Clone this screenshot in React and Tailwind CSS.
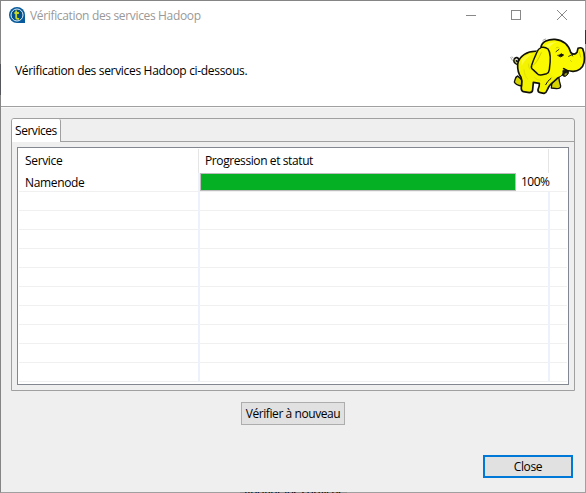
const rows = Array.from({ length: 10 }, (_, i) => i);

function AppIcon() {
  return (
    <svg width="16" height="16" viewBox="0 0 16 16" className="shrink-0">
      <path d="M8 0a8 8 0 1 0 0 16h8V8a8 8 0 0 0-8-8z" fill="#075a9b" />
      <circle cx="8" cy="8" r="6" fill="#034f8c" stroke="#e4eff7" strokeWidth="1" />
      <path d="M7.2 3.6v6.6q0 1.6 1.6 1.6h1.4M5.4 6h4.5" fill="none" stroke="#c9d62b" strokeWidth="1.8" />
    </svg>
  );
}

function Elephant() {
  return (
    <svg width="86" height="75" viewBox="0 0 258 225" className="-mr-px shrink-0">
      <g stroke="#11110a" strokeLinejoin="round" strokeLinecap="round">
        <path d="M53 138C44 141 46 150 43 156Q47 165 64 168L66 150Z" fill="#d5d400" strokeWidth="4" />
        <path d="M157 143L176 138Q177 153 182 168Q182 176 170 176L154 174Z" fill="#d5d400" strokeWidth="4" />
        <path d="M61 102C48 107 39 96 43 87C47 80 56 82 56 90C55 96 51 96 49 92" fill="none" strokeWidth="5" />
        <path d="M60 101C49 102 43 96 45 89" fill="none" stroke="#969d22" strokeWidth="2.5" />
        <path d="M112 64C83 62 57 77 53 103C52 121 56 132 63 142Q68 154 65 166Q61 181 70 185L88 188Q98 187 98 179L100 157L118 160Q119 168 114 179Q113 187 121 188L132 190Q139 188 142 179Q147 165 162 154L178 140L190 132L204 120L170 60Z" fill="#f4f300" strokeWidth="5" />
        <path d="M187 119Q190 122 194 121L205 120Q208 132 198 138Q191 142 187 135Z" fill="#17170b" strokeWidth="3" />
        <path d="M192 136Q193 127 202 128L201 134Q197 139 192 136Z" fill="#a3a719" strokeWidth="1" />
        <path d="M123 51C126 34 145 27 165 28C190 30 206 46 212 67Q223 78 231 67L234 55Q242 51 248 56Q256 76 252 98C249 114 234 125 218 124Q202 124 191 116L187 123Q190 137 175 140Q159 145 145 123L108 65Z" fill="#faf900" stroke="none" />
        <path d="M123 51C126 34 145 27 165 28C190 30 206 46 212 67Q223 78 231 67L234 55Q242 51 248 56Q256 76 252 98C249 114 234 125 218 124Q202 124 191 116" fill="none" strokeWidth="5" />
        <path d="M144 57C130 48 116 52 111 66C105 79 99 93 95 106Q92 115 99 119L111 130Q116 138 127 134L140 131Q147 128 148 119C151 99 155 71 144 57Z" fill="#faf900" stroke="none" />
        <path d="M123 53C116 56 113 60 111 66C105 79 99 93 95 106Q92 115 99 119L111 130Q116 138 127 134L140 131Q147 128 148 119C151 99 155 71 144 57Q135 50 126 52" fill="none" strokeWidth="4.5" />
        <path d="M98 107Q110 101 124 68" fill="none" stroke="#b7b800" strokeWidth="2" />
        <path d="M72 119Q73 140 83 147M85 102Q84 111 90 118M104 143Q114 153 121 151" fill="none" stroke="#d6d800" strokeWidth="2" />
        <path d="M177 77L184 71L190 76L183 80Z" fill="#11110a" strokeWidth="3" />
        <path d="M173 76L190 74" fill="none" strokeWidth="2.5" />
        <path d="M206 79L221 72M212 68L218 78M168 65L177 58" fill="none" strokeWidth="2.5" />
        <path d="M211 91L215 95M238 66L242 81M168 54Q171 50 175 52" fill="none" stroke="#b7b800" strokeWidth="2" />
        <path d="M153 145Q142 153 137 164" fill="none" strokeWidth="3" />
        <path d="M128 32Q131 28 137 27M32 82L37 91M36 81L39 83" fill="none" stroke="#777" strokeWidth="2" />
      </g>
      <path d="M64 87Q78 72 98 71Q76 85 65 108Z" fill="#ffff55" opacity=".6" />
      <path d="M134 47Q151 35 170 37Q152 43 148 54Z" fill="#ffff65" opacity=".7" />
    </svg>
  );
}

export default function App() {
  return (
    <div className="relative flex h-[493px] w-[586px] flex-col border border-[#858585] border-r-[#a0a0a0] border-b-[#a0a0a0] bg-[#efefef] font-['Open_Sans','Noto_Sans',sans-serif] text-[12px] leading-4 tracking-[-0.34px] text-black">
      <header className="flex h-[106px] shrink-0 flex-col border-b border-[#a0a0a0] bg-white">
        <div className="flex h-[28px] shrink-0 items-center pl-2">
          <AppIcon />
          <span className="mt-[2px] ml-[5px] w-[172px] whitespace-nowrap text-[#999]">Vérification des services Hadoop</span>
          <div className="ml-auto flex items-center pr-[18px] text-[#888]">
            <svg width="10" height="10" viewBox="0 0 10 10" fill="none" stroke="currentColor"><path d="M0 5.5h10" /></svg>
            <svg width="10" height="10" viewBox="0 0 10 10" fill="none" stroke="currentColor" className="ml-[35px]"><rect x=".5" y=".5" width="9" height="9" /></svg>
            <svg width="10" height="10" viewBox="0 0 10 10" fill="none" stroke="currentColor" className="ml-[36px]"><path d="M0 0L10 10M10 0L0 10" /></svg>
          </div>
        </div>
        <div className="mt-px flex h-[75px] justify-between pl-[14px]">
          <p className="mt-[33px] whitespace-nowrap tracking-[-0.32px]">Vérification des services Hadoop ci-dessous.</p>
          <Elephant />
        </div>
      </header>
      <main className="flex grow flex-col border-t border-[#f8f8f8] px-[10px] pt-[10px]">
        <section className="h-[273px] shrink-0 rounded-t-[3px] border border-[#a0a0a0]">
          <div className="flex h-[23px]">
            <div className="w-[49px] rounded-tl-[2px] rounded-tr-[2px] border-r border-[#a0a0a0] bg-white pl-[3px] pt-[4px] tracking-[-0.45px] whitespace-nowrap">Services</div>
            <div className="grow border-b border-[#a0a0a0]" />
          </div>
          <div className="mx-[5px] mt-[5px] flex h-[238px] flex-col border border-[#828790] bg-white px-px pt-px">
            <div className="flex h-[24px] shrink-0">
              <div className="w-[180px] border-r border-[#e5e5e5] pl-[6px] pt-[4px]">Service</div>
              <div className="w-[350px] border-r border-[#e5e5e5] pl-[6px] pt-[4px] tracking-[-0.4px]">Progression et statut</div>
            </div>
            <div className="flex h-[19px] shrink-0 border-b border-[#f0f0f0]">
              <div className="w-[179px] pl-[6px] pt-[2px]">Namenode</div>
              <div className="w-[2px] bg-[#ecf1fa]" />
              <div className="h-[18px] w-[316px] border border-[#bcbcbc] bg-[#06b025]" />
              <div className="w-[32px] pl-[5px] pt-px tracking-[-0.5px] whitespace-nowrap">100%</div>
            </div>
            {rows.map((r) => (
              <div key={r} className="flex h-[19px] shrink-0 border-b border-[#f0f0f0]">
                <div className="-mb-px ml-[179px] w-[2px] bg-[#ecf1fa]" />
                <div className="-mb-px ml-[348px] w-[2px] bg-[#ecf1fa]" />
              </div>
            ))}
          </div>
        </section>
        <button className="mt-[11px] ml-[230px] h-[23px] w-[104px] shrink-0 border border-[#adadad] bg-[#e1e1e1] tracking-[-0.42px] whitespace-nowrap">Vérifier à nouveau</button>
        <button className="mt-[30px] mr-[2px] h-[23px] w-[90px] shrink-0 self-end border-2 border-[#0078d7] bg-[#e1e1e1]">Close</button>
      </main>
      <div className="absolute -left-px top-[63px] h-[31px] w-px bg-[#55555c]" />
      <div className="absolute -right-px top-[29px] h-[14px] w-px bg-[#333]" />
      <div className="absolute -bottom-px left-[239px] flex h-px w-[107px] items-center justify-center overflow-hidden bg-[#8d8d8d] whitespace-nowrap">Vérifier les services</div>
    </div>
  );
}
